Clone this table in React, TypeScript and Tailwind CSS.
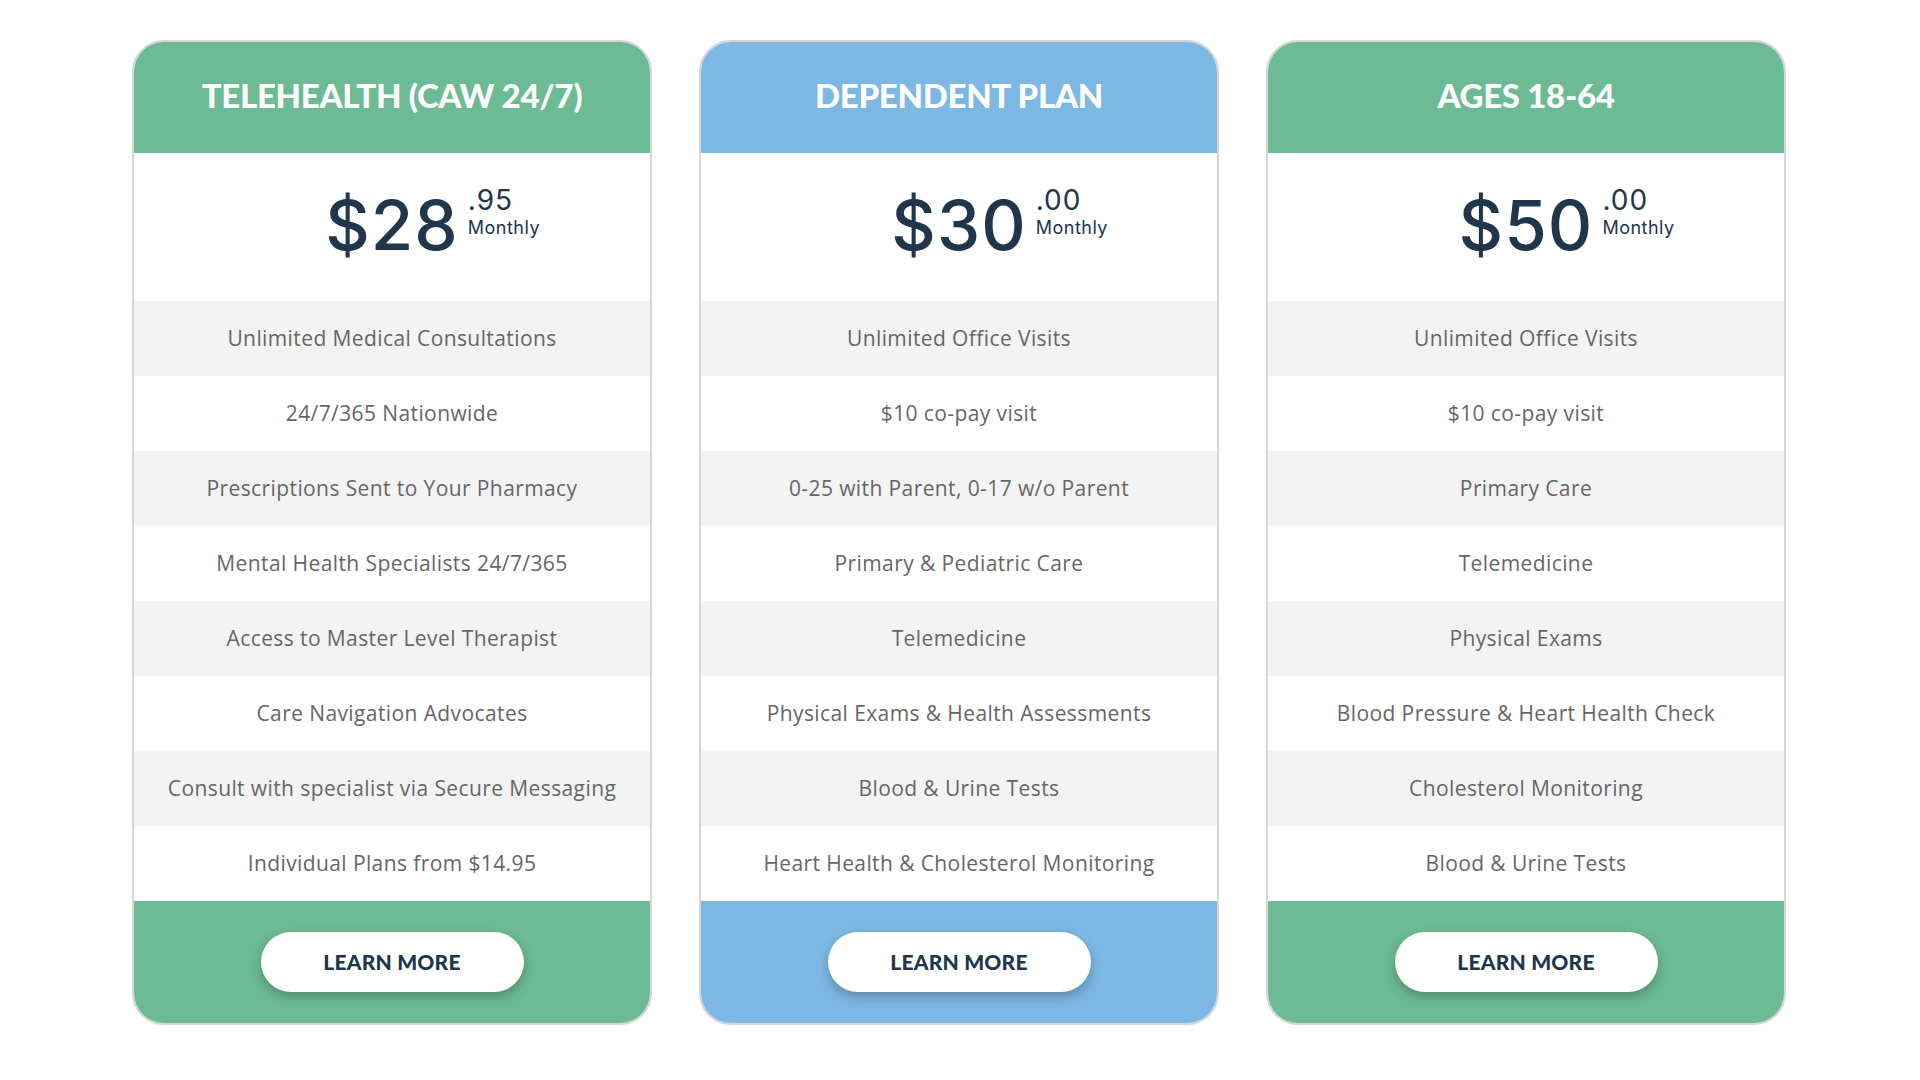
import React from "react";

type Plan = {
  title: string;
  dollars: string;
  cents: string;
  color: "green" | "blue";
  features: string[];
};

const plans: Plan[] = [
  {
    title: "TELEHEALTH (CAW 24/7)",
    dollars: "$28",
    cents: ".95",
    color: "green",
    features: [
      "Unlimited Medical Consultations",
      "24/7/365 Nationwide",
      "Prescriptions Sent to Your Pharmacy",
      "Mental Health Specialists 24/7/365",
      "Access to Master Level Therapist",
      "Care Navigation Advocates",
      "Consult with specialist via Secure Messaging",
      "Individual Plans from $14.95",
    ],
  },
  {
    title: "DEPENDENT PLAN",
    dollars: "$30",
    cents: ".00",
    color: "blue",
    features: [
      "Unlimited Office Visits",
      "$10 co-pay visit",
      "0-25 with Parent, 0-17 w/o Parent",
      "Primary & Pediatric Care",
      "Telemedicine",
      "Physical Exams & Health Assessments",
      "Blood & Urine Tests",
      "Heart Health & Cholesterol Monitoring",
    ],
  },
  {
    title: "AGES 18-64",
    dollars: "$50",
    cents: ".00",
    color: "green",
    features: [
      "Unlimited Office Visits",
      "$10 co-pay visit",
      "Primary Care",
      "Telemedicine",
      "Physical Exams",
      "Blood Pressure & Heart Health Check",
      "Cholesterol Monitoring",
      "Blood & Urine Tests",
    ],
  },
];

function Card({ plan }: { plan: Plan }) {
  const bg = plan.color === "green" ? "bg-[#6cbb94]" : "bg-[#7db8e5]";
  return (
    <div className="w-[520px] rounded-[32px] border-2 border-[#d6d6d6] overflow-hidden bg-white flex flex-col">
      <div className={`${bg} h-[111px] flex items-center justify-center pb-[5px]`}>
        <h2 className="text-white font-black text-[33px] tracking-[-0.3px] leading-none font-['Lato',sans-serif]">
          {plan.title}
        </h2>
      </div>
      <div className="h-[148px] flex items-start justify-center bg-white pt-[38px]">
        <div className="relative text-[#21354b] font-['Inter',sans-serif]">
          <span className="block text-[69px] leading-none font-medium tracking-[1px]">{plan.dollars}</span>
          <div className="absolute left-full top-[-5px] ml-[9px] flex flex-col">
            <span className="text-[28px] leading-none tracking-[1px]">{plan.cents}</span>
            <span className="text-[18px] leading-none tracking-[0.5px] mt-[5px]">Monthly</span>
          </div>
        </div>
      </div>
      {plan.features.map((f, i) => (
        <div
          key={f}
          className={`h-[75px] flex items-center justify-center ${i % 2 === 0 ? "bg-[#f3f3f3]" : "bg-white"}`}
        >
          <span className="text-[#666666] text-[21px] tracking-[0.4px] font-['Open_Sans',sans-serif]">{f}</span>
        </div>
      ))}
      <div className={`${bg} h-[122px] flex items-center justify-center`}>
        <button className="w-[263px] h-[60px] rounded-full bg-white shadow-[0_5px_12px_rgba(0,0,0,0.25)] text-[#21354b] font-black text-[21px] tracking-[0.2px] font-['Lato',sans-serif]">
          LEARN MORE
        </button>
      </div>
    </div>
  );
}

export default function App() {
  return (
    <div className="w-[1920px] h-[1080px] bg-white flex items-start justify-start gap-[47px] pt-[40px] pl-[132px]">
      {plans.map((p) => (
        <Card key={p.title} plan={p} />
      ))}
    </div>
  );
}
